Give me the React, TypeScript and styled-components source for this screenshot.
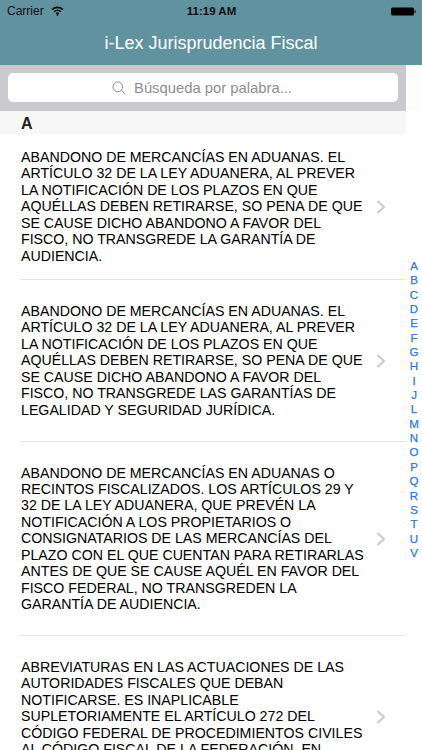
import React from "react";
import styled, { createGlobalStyle } from "styled-components";

const Global = createGlobalStyle`
  html, body { margin: 0; padding: 0; background: #fff; }
  * { box-sizing: border-box; }
`;

const Screen = styled.div`
  position: relative;
  width: 422px;
  height: 750px;
  overflow: hidden;
  background: #fff;
  font-family: "Liberation Sans", Arial, sans-serif;
  color: #000;
`;

const Header = styled.header`
  height: 65px;
  background: #61929f;
  display: flex;
  flex-direction: column;
`;

const StatusBar = styled.div`
  height: 22px;
  display: grid;
  grid-template-columns: 1fr auto 1fr;
  align-items: center;
  padding: 0 6px 0 7px;
  font-size: 12px;
  color: #111;
`;

const StatusLeft = styled.div`
  display: flex;
  align-items: center;
  gap: 7px;
`;

const StatusTime = styled.div`
  font-weight: 700;
  font-size: 11.5px;
`;

const StatusRight = styled.div`
  display: flex;
  justify-content: flex-end;
`;

const NavTitle = styled.h1`
  margin: 0;
  height: 43px;
  display: flex;
  align-items: center;
  justify-content: center;
  padding-bottom: 1px;
  font-size: 18px;
  font-weight: 400;
  color: #fff;
`;

const TopBand = styled.div`
  background: #fdfdfd;
`;

const SearchBar = styled.div`
  width: 406px;
  height: 46px;
  background: #c9c9ce;
  padding: 8px 8px 9px;
`;

const SearchField = styled.div`
  height: 29px;
  background: #fff;
  border-radius: 5px;
  display: flex;
  align-items: center;
  justify-content: center;
  gap: 8px;
  padding-right: 2px;
  font-size: 14.8px;
  color: #8e8e93;
`;

const Body = styled.div`
  width: 406px;
`;

const SectionHeader = styled.div`
  height: 23px;
  background: #f7f7f7;
  padding-left: 21px;
  font-size: 16px;
  font-weight: 700;
  line-height: 25px;
  color: #222;
`;

const Row = styled.div<{ $height: number }>`
  height: ${(p) => p.$height}px;
  margin-left: 20px;
  display: flex;
  align-items: center;
  justify-content: space-between;
  padding: 0 20px 0 1px;
  border-bottom: 1px solid #e6e6e9;
`;

const RowText = styled.div`
  font-size: 14.2px;
  line-height: 16.4px;
  white-space: nowrap;
  color: #000;
`;

const Chevron = styled.svg`
  width: 10px;
  height: 14px;
  flex: none;
  fill: none;
  stroke: #c7c7cc;
  stroke-width: 1.8;
`;

const IndexList = styled.nav`
  position: absolute;
  top: 259px;
  right: 0;
  width: 16px;
  display: flex;
  flex-direction: column;
  align-items: center;
  font-size: 11.5px;
  line-height: 14.35px;
  color: #2a7ae2;
  -webkit-text-stroke: 0.25px #2a7ae2;
`;

const rows = [
  {
    h: 146,
    lines: [
      "ABANDONO DE MERCANCÍAS EN ADUANAS. EL",
      "ARTÍCULO 32 DE LA LEY ADUANERA, AL PREVER",
      "LA NOTIFICACIÓN DE LOS PLAZOS EN QUE",
      "AQUÉLLAS DEBEN RETIRARSE, SO PENA DE QUE",
      "SE CAUSE DICHO ABANDONO A FAVOR DEL",
      "FISCO, NO TRANSGREDE LA GARANTÍA DE",
      "AUDIENCIA.",
    ],
  },
  {
    h: 162,
    lines: [
      "ABANDONO DE MERCANCÍAS EN ADUANAS. EL",
      "ARTÍCULO 32 DE LA LEY ADUANERA, AL PREVER",
      "LA NOTIFICACIÓN DE LOS PLAZOS EN QUE",
      "AQUÉLLAS DEBEN RETIRARSE, SO PENA DE QUE",
      "SE CAUSE DICHO ABANDONO A FAVOR DEL",
      "FISCO, NO TRANSGREDE LAS GARANTÍAS DE",
      "LEGALIDAD Y SEGURIDAD JURÍDICA.",
    ],
  },
  {
    h: 194,
    lines: [
      "ABANDONO DE MERCANCÍAS EN ADUANAS O",
      "RECINTOS FISCALIZADOS. LOS ARTÍCULOS 29 Y",
      "32 DE LA LEY ADUANERA, QUE PREVÉN LA",
      "NOTIFICACIÓN A LOS PROPIETARIOS O",
      "CONSIGNATARIOS DE LAS MERCANCÍAS DEL",
      "PLAZO CON EL QUE CUENTAN PARA RETIRARLAS",
      "ANTES DE QUE SE CAUSE AQUÉL EN FAVOR DEL",
      "FISCO FEDERAL, NO TRANSGREDEN LA",
      "GARANTÍA DE AUDIENCIA.",
    ],
  },
  {
    h: 162,
    lines: [
      "ABREVIATURAS EN LAS ACTUACIONES DE LAS",
      "AUTORIDADES FISCALES QUE DEBAN",
      "NOTIFICARSE. ES INAPLICABLE",
      "SUPLETORIAMENTE EL ARTÍCULO 272 DEL",
      "CÓDIGO FEDERAL DE PROCEDIMIENTOS CIVILES",
      "AL CÓDIGO FISCAL DE LA FEDERACIÓN. EN",
      "\u00a0",
    ],
  },
];

const letters = "ABCDEFGHIJLMNOPQRSTUV".split("");

export default function App() {
  return (
    <Screen>
      <Global />
      <Header>
        <StatusBar>
          <StatusLeft>
            <span>Carrier</span>
            <svg width="13" height="10" viewBox="0 0 14 11" fill="none" stroke="#111" strokeWidth="1.7">
              <path d="M1 4 A8.5 8.5 0 0 1 13 4" />
              <path d="M3.3 6.3 A5.4 5.4 0 0 1 10.7 6.3" />
              <path d="M5.4 8.3 A2.6 2.6 0 0 1 8.6 8.3" />
              <circle cx="7" cy="9.8" r="1" fill="#111" stroke="none" />
            </svg>
          </StatusLeft>
          <StatusTime>11:19 AM</StatusTime>
          <StatusRight>
            <svg width="25" height="9" viewBox="0 0 25 9">
              <rect x="0" y="0.5" width="23" height="8" rx="1.5" fill="#000" />
              <rect x="23.5" y="3" width="1.2" height="3" fill="#222" />
            </svg>
          </StatusRight>
        </StatusBar>
        <NavTitle>i-Lex Jurisprudencia Fiscal</NavTitle>
      </Header>
      <TopBand>
        <SearchBar>
          <SearchField>
            <svg width="14" height="14" viewBox="0 0 14 14" fill="none" stroke="#8e8e93" strokeWidth="1">
              <circle cx="5.8" cy="5.8" r="4.9" />
              <path d="M9.4 9.4 L13.4 13.4" />
            </svg>
            <span>Búsqueda por palabra...</span>
          </SearchField>
        </SearchBar>
      </TopBand>
      <Body>
        <SectionHeader>A</SectionHeader>
        {rows.map((r, i) => (
          <Row key={i} $height={r.h}>
            <RowText>
              {r.lines.map((l, j) => (
                <div key={j}>{l}</div>
              ))}
            </RowText>
            <Chevron viewBox="0 0 10 14">
              <path d="M1.5 1 L8 7 L1.5 13" />
            </Chevron>
          </Row>
        ))}
      </Body>
      <IndexList>
        {letters.map((l) => (
          <span key={l}>{l}</span>
        ))}
      </IndexList>
    </Screen>
  );
}
